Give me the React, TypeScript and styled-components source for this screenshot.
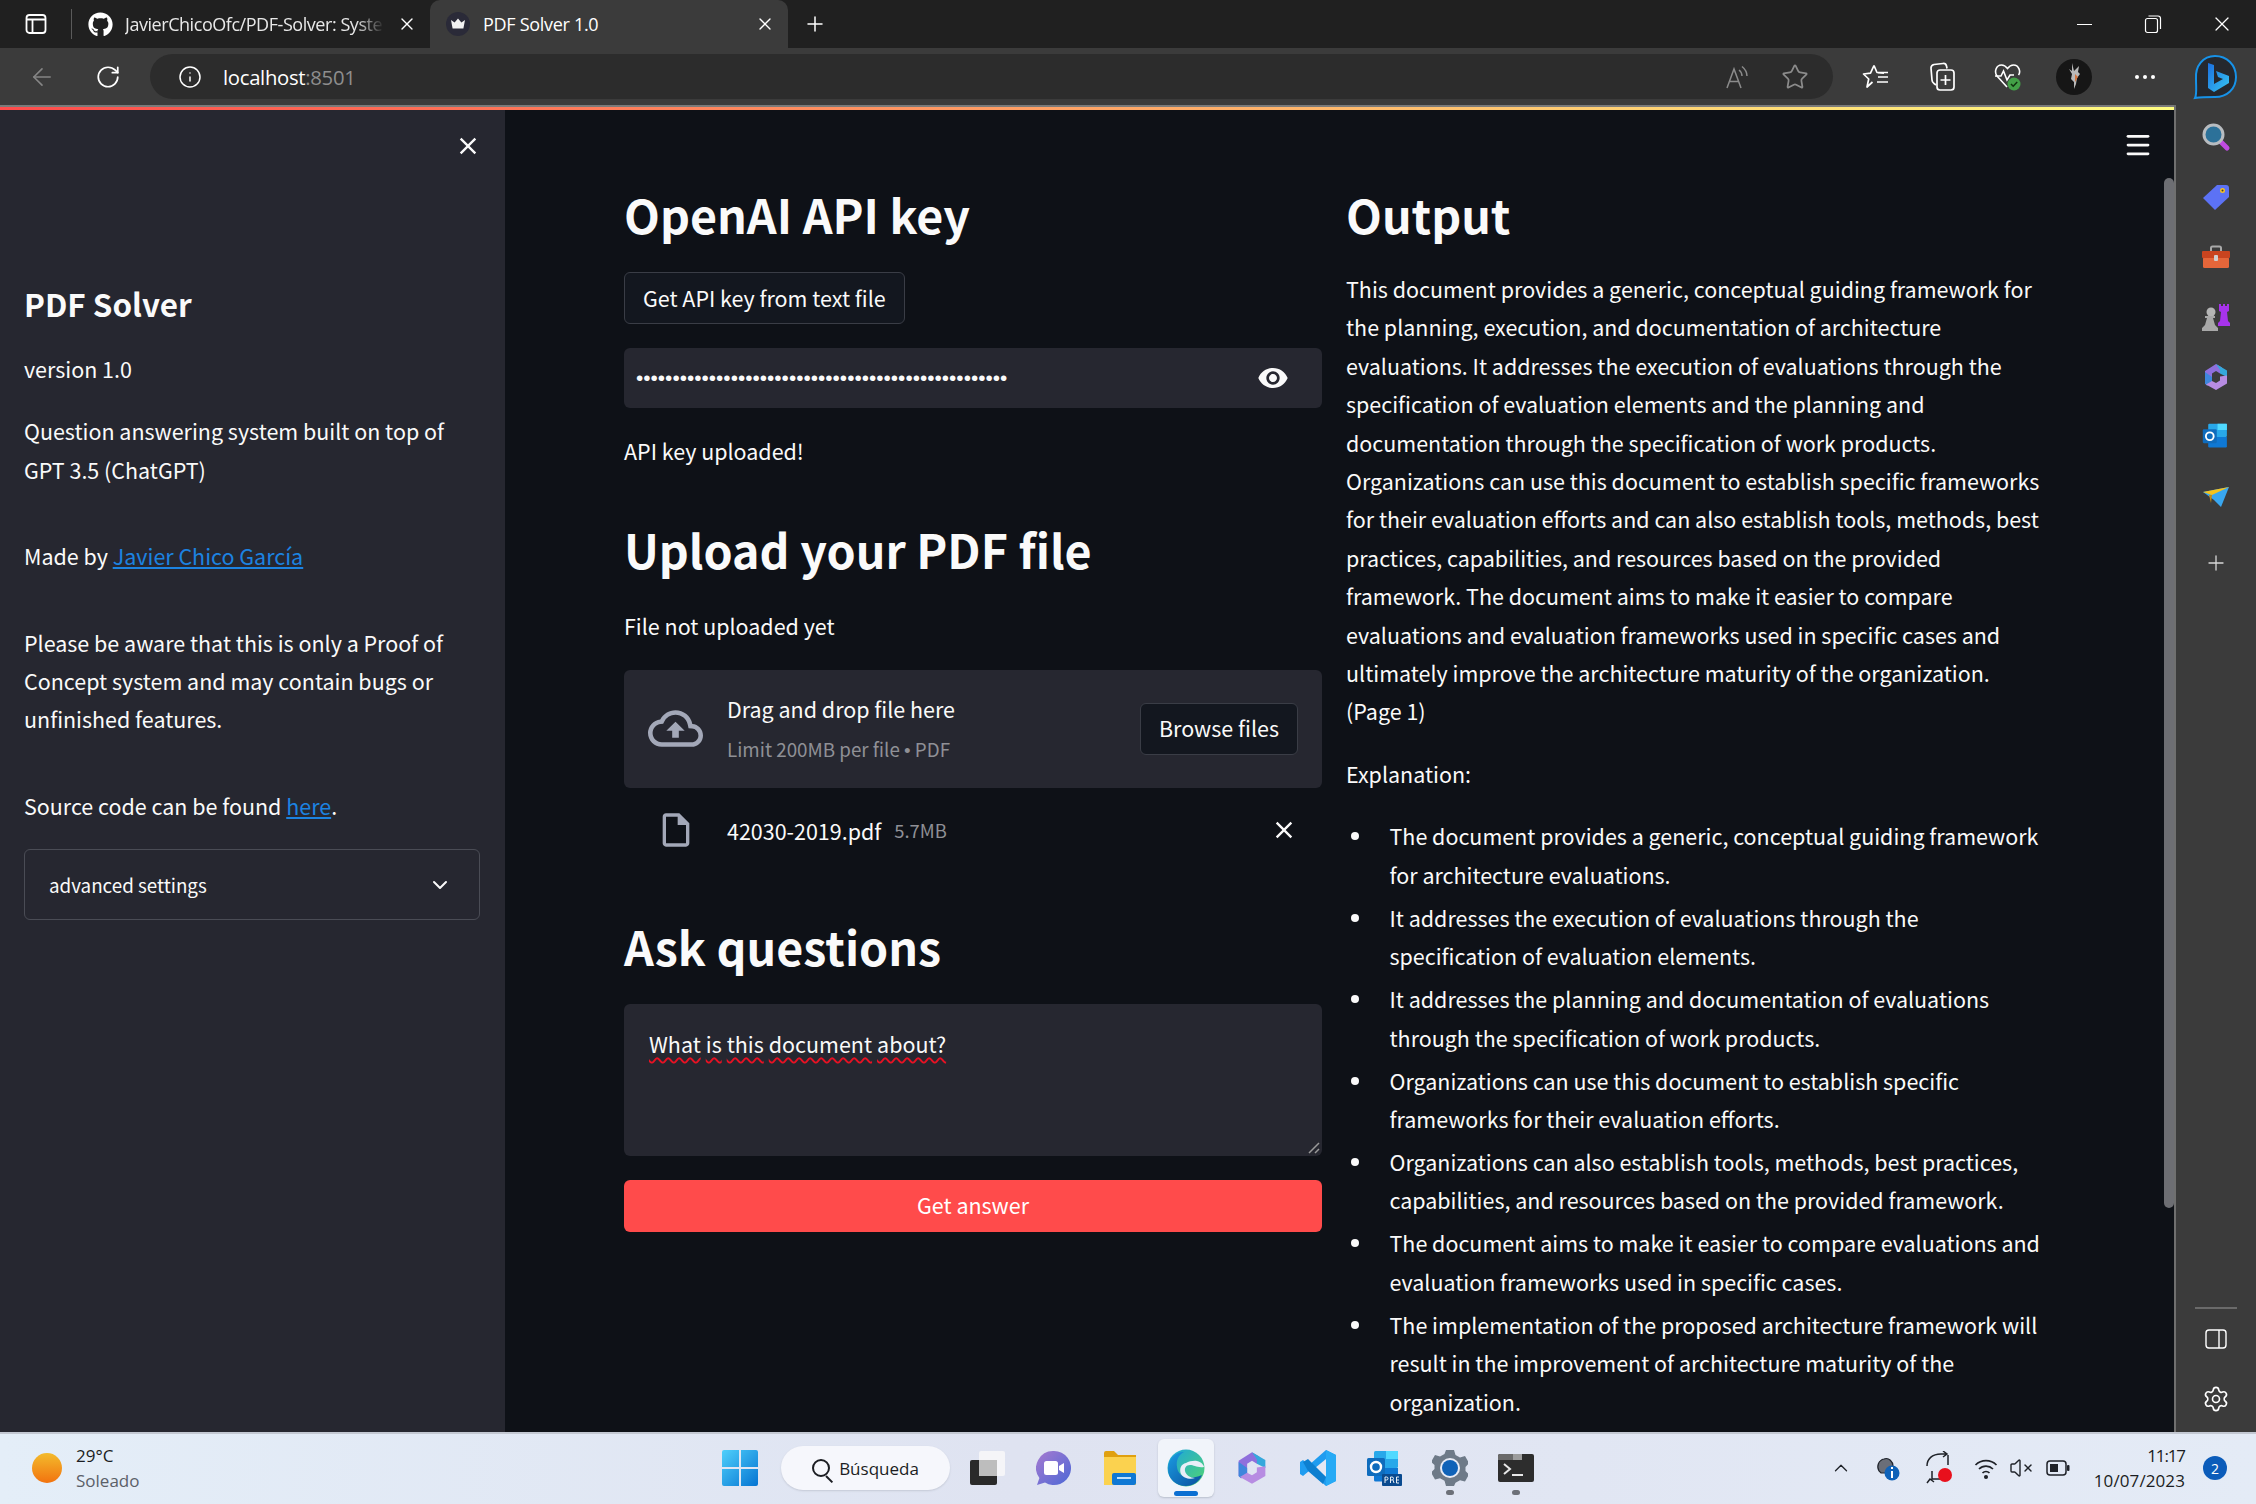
import React, { FC } from "react";
import styled, { createGlobalStyle } from "styled-components";
import { ArrowLeft, ChevronDown, ChevronUp, Info, Menu, Plus, RotateCw, Settings, Star, VolumeX, X } from "lucide-react";
import { FaGithub } from "react-icons/fa";
import { MdClose, MdOutlineCloudUpload, MdOutlineInsertDriveFile, MdVisibility } from "react-icons/md";

const summary =
	"This document provides a generic, conceptual guiding framework for the planning, execution, and documentation of architecture evaluations. It addresses the execution of evaluations through the specification of evaluation elements and the planning and documentation through the specification of work products. Organizations can use this document to establish specific frameworks for their evaluation efforts and can also establish tools, methods, best practices, capabilities, and resources based on the provided framework. The document aims to make it easier to compare evaluations and evaluation frameworks used in specific cases and ultimately improve the architecture maturity of the organization. (Page 1)";

const explanation = [
	"The document provides a generic, conceptual guiding framework for architecture evaluations.",
	"It addresses the execution of evaluations through the specification of evaluation elements.",
	"It addresses the planning and documentation of evaluations through the specification of work products.",
	"Organizations can use this document to establish specific frameworks for their evaluation efforts.",
	"Organizations can also establish tools, methods, best practices, capabilities, and resources based on the provided framework.",
	"The document aims to make it easier to compare evaluations and evaluation frameworks used in specific cases.",
	"The implementation of the proposed architecture framework will result in the improvement of architecture maturity of the organization.",
];

const question = ["What", "is", "this", "document", "about?"];

const VerticalTabsIcon = () => (
	<svg width="24" height="24" viewBox="0 0 24 24" fill="none" stroke="#fff" strokeWidth="1.8">
		<rect x="2.5" y="3" width="19" height="18" rx="3" />
		<path d="M3 7.5h18M8.5 7.5V21" />
	</svg>
);

const CrownIcon = () => (
	<svg width="24" height="24" viewBox="0 0 24 24">
		<circle cx="12" cy="12" r="12" fill="#2a2a38" />
		<path d="M5 8l3.6 2.6L12 6.5l3.4 4.1L19 8l-1.6 8.5H6.6z" fill="#f2f2f2" />
	</svg>
);

const RestoreIcon = () => (
	<svg width="18" height="20" viewBox="0 0 18 20" fill="none" stroke="#fff" strokeWidth="1.2">
		<rect x="1.5" y="4.5" width="12" height="14" rx="2" />
		<path d="M4.5 2h9.5a2.5 2.5 0 0 1 2.5 2.5V15" />
	</svg>
);

const ReadAloudIcon = () => (
	<svg width="26" height="26" viewBox="0 0 26 26" fill="none" stroke="#8b8b8b" strokeWidth="1.5">
		<path d="M3 24L10 5l7 19M5.5 17.5h9" />
		<path d="M15 6c2 1.500 3 3.500 3 6M18 2.500c3 2.500 5 5.500 5 9.500" />
	</svg>
);

const FavoritesIcon = () => (
	<svg width="28" height="28" viewBox="0 0 28 28" fill="none" stroke="#fff" strokeWidth="1.7">
		<path d="M12 2.500l3 7 7 .6M10.500 19l-5.500 5 1.700-8L1.500 11l7-.8L12 2.500" strokeLinejoin="round" />
		<path d="M16 14h10M15 19h11M15 24h0M16 9.500h10" />
	</svg>
);

const CollectionsIcon = () => (
	<svg width="28" height="30" viewBox="0 0 28 30" fill="none" stroke="#fff" strokeWidth="1.7">
		<path d="M8 23l-2-1.500c-1.500-1-2-2-2-3.500L3 6c0-2 1-3 3-3.500L15 1.500c1.500-.2 3 .5 3.500 2.500l.5 2.500" />
		<rect x="9" y="8" width="17" height="20" rx="3" />
		<path d="M17.500 13v10M12.500 18h10" />
	</svg>
);

const HealthIcon = () => (
	<svg width="28" height="30" viewBox="0 0 28 30" fill="none">
		<path d="M13 25L3 14C0 10 2 3 7.500 3c3 0 4.500 1.500 6 3.500 1.500-2 3-3.500 6-3.500C25 3 27 10 24.500 13" stroke="#fff" strokeWidth="1.6" />
		<path d="M1 14h6l2.500-5 3.500 9 3-5h4" stroke="#fff" strokeWidth="1.6" />
		<circle cx="20" cy="22" r="6.500" fill="#43a047" />
		<path d="M17 22l2.200 2.200 4-4.200" stroke="#10310f" strokeWidth="1.500" />
	</svg>
);

const AvatarIcon = () => (
	<svg width="36" height="36" viewBox="0 0 36 36">
		<circle cx="18" cy="18" r="18" fill="#161616" />
		<path d="M16 4l2 8 5-5-1 6 2 2-3 4-1 6-2 5v-7l-3-3 1-5-3-5 3 2z" fill="#b9b9b9" />
		<path d="M19 15l3 3-3 5z" fill="#d2743e" />
	</svg>
);

const BingIcon = () => (
	<svg width="46" height="46" viewBox="0 0 46 46" fill="none">
		<defs>
			<linearGradient id="bingMark" x1="0" y1="0" x2="1" y2="1">
				<stop offset="0" stopColor="#1b6fe0" />
				<stop offset="1" stopColor="#37c6f2" />
			</linearGradient>
		</defs>
		<path d="M23 2c12 0 21 9 21 21 0 12-9 20-21 20-6 0-13 0-20 1 2-4 1-10 1-19C3 12 11 2 23 2z" stroke="#1792e8" strokeWidth="2" fill="#25282e" />
		<path d="M16 9l6 2v19l9-5-5-2-2-6 13 5v7l-15 9-6-4z" fill="url(#bingMark)" />
	</svg>
);

const SearchGlassIcon = () => (
	<svg width="30" height="30" viewBox="0 0 30 30">
		<path d="M18 18l8 8" stroke="#c04be0" strokeWidth="5" strokeLinecap="round" />
		<circle cx="12.500" cy="12.500" r="9.500" fill="#2c7199" stroke="#b8bcc0" strokeWidth="3" />
	</svg>
);

const TagIcon = () => (
	<svg width="28" height="28" viewBox="0 0 28 28">
		<path d="M15 2h9a3 3 0 0 1 3 3v9L13 27 1 15z" fill="#5c72f5" />
		<circle cx="20.500" cy="7.500" r="2.500" fill="#f7c325" />
		<circle cx="20.500" cy="7.500" r="1" fill="#3a3a3a" />
	</svg>
);

const ToolboxIcon = () => (
	<svg width="30" height="24" viewBox="0 0 30 24">
		<path d="M10 6V3a1.500 1.500 0 0 1 1.500-1.500h7A1.500 1.500 0 0 1 20 3v3" fill="none" stroke="#a9a9a9" strokeWidth="2" />
		<rect x="2" y="12" width="26" height="11" rx="1.500" fill="#e5663a" />
		<rect x="1" y="6" width="28" height="7" rx="1" fill="#c9441f" />
		<rect x="13" y="10" width="4" height="6" rx="1" fill="#cfcfcf" />
	</svg>
);

const ChessIcon = () => (
	<svg width="30" height="30" viewBox="0 0 30 30">
		<path d="M18 2h2v2h2V2h2v2h2V2h2v7l-2 1 1 9 2 2v3H17v-3l2-2 1-9-2-1z" fill="#a733ec" />
		<circle cx="10" cy="10" r="4.500" fill="#b5b5b5" />
		<path d="M6 14h8v2h-2l2 7 3 3v3H1v-3l3-3 2-7H4v-2z" fill="#a8a8a8" />
	</svg>
);

const CopilotIcon = ({ size }: { size: number }) => (
	<svg width={size} height={size} viewBox="0 0 28 28">
		<path d="M14 1l6 3.500-2 6-4-2.500-4 2.500V20l-5 2.500-2-2V8z" fill="#8f6fdc" />
		<path d="M3 20.500V9l7 5v6l-5 2.500z" fill="#3f86dc" />
		<path d="M14 1l11 6.500V14l-7-3.500V7z" fill="#35a8dc" />
		<path d="M25 12.500v8L14 27 4 21.500 10 18l4 2 4-2.500v-4z" fill="#b78ce2" />
	</svg>
);

const OutlookIcon = ({ size, pre }: { size: number; pre?: boolean }) => (
	<svg width={size} height={size} viewBox="0 0 36 36">
		<rect x="8" y="1" width="24" height="17" rx="1.500" fill="#28a8ea" />
		<rect x="20" y="1" width="12" height="8" fill="#50d9ff" />
		<path d="M8 18h24v12a1.500 1.500 0 0 1-1.500 1.500h-21A1.500 1.500 0 0 1 8 30z" fill="#0f78d4" />
		<rect x="1" y="8" width="18" height="18" rx="1.500" fill="#0f6cbd" />
		<circle cx="10" cy="17" r="5" fill="none" stroke="#fff" strokeWidth="2.400" />
		{pre && <rect x="16" y="24" width="20" height="12" rx="1" fill="#0a4a8f" />}
		{pre && <path d="M19 33v-6h1.500a1.500 1.500 0 0 1 0 3H19M24.500 33v-6H26a1.500 1.500 0 0 1 0 3h-1.500M27 30l1 3M33 27h-2.500v6H33M30.500 30H33" fill="none" stroke="#fff" strokeWidth=".9" />}
	</svg>
);

const PaperPlaneIcon = () => (
	<svg width="28" height="22" viewBox="0 0 28 22">
		<path d="M1 6l26-5-8 20-7-7z" fill="#39a7f0" />
		<path d="M1 6l26-5-17 8z" fill="#f6c31c" />
		<path d="M7 9l3 0-1 8z" fill="#c58a12" />
	</svg>
);

const DockIcon = () => (
	<svg width="22" height="20" viewBox="0 0 22 20" fill="none" stroke="#fff" strokeWidth="1.400">
		<rect x="1" y="1" width="20" height="18" rx="3" />
		<path d="M14 1v18" />
	</svg>
);

const WindowsIcon = () => (
	<svg width="36" height="36" viewBox="0 0 36 36">
		<defs>
			<linearGradient id="winBlue" x1="0" y1="0" x2="1" y2="1">
				<stop offset="0" stopColor="#4fd0fb" />
				<stop offset="1" stopColor="#0574d2" />
			</linearGradient>
		</defs>
		<path d="M2 0h15v17H0V2a2 2 0 0 1 2-2zM19 0h15a2 2 0 0 1 2 2v15H19zM0 19h17v17H2a2 2 0 0 1-2-2zM19 19h17v15a2 2 0 0 1-2 2H19z" fill="url(#winBlue)" />
	</svg>
);

const TaskViewIcon = () => (
	<svg width="36" height="36" viewBox="0 0 36 36">
		<rect x="0" y="10" width="27" height="25" rx="2" fill="#2a2a2a" />
		<rect x="9" y="1" width="26" height="25" rx="2" fill="#f6f6f8" fillOpacity=".92" />
		<rect x="9" y="10" width="18" height="16" fill="#bdbdbd" />
	</svg>
);

const TeamsIcon = () => (
	<svg width="36" height="36" viewBox="0 0 36 36">
		<defs>
			<linearGradient id="chatFill" x1="0" y1="0" x2="1" y2="1">
				<stop offset="0" stopColor="#a77ad0" />
				<stop offset="1" stopColor="#4c68d6" />
			</linearGradient>
		</defs>
		<path d="M18 1a17 17 0 1 1-9 31.400L1 35l2.400-7A17 17 0 0 1 18 1z" fill="url(#chatFill)" />
		<rect x="8" y="11" width="14" height="14" rx="2.500" fill="#fff" />
		<path d="M23 16l5-3v10l-5-3z" fill="#fff" />
	</svg>
);

const FolderIcon = () => (
	<svg width="32" height="34" viewBox="0 0 32 34">
		<path d="M0 2a2 2 0 0 1 2-2h8l4 4h18v8H0z" fill="#e0a010" />
		<path d="M0 6h32v28H0z" fill="#fbd24f" />
		<rect x="8" y="22" width="24" height="12" rx="2" fill="#0f78d4" />
		<rect x="13" y="26" width="14" height="2" fill="#bfe0fb" />
	</svg>
);

const EdgeIcon = () => (
	<svg width="38" height="38" viewBox="0 0 38 38">
		<defs>
			<linearGradient id="edgeTop" x1="0" y1="0" x2="1" y2="1">
				<stop offset="0" stopColor="#1ba5e0" />
				<stop offset="1" stopColor="#52d56f" />
			</linearGradient>
			<linearGradient id="edgeLow" x1="0" y1="0" x2="1" y2="1">
				<stop offset="0" stopColor="#1b9de2" />
				<stop offset="1" stopColor="#0a4f9e" />
			</linearGradient>
		</defs>
		<circle cx="19" cy="19" r="18.500" fill="url(#edgeTop)" />
		<path d="M1 20C1 9 9 3 17 3c-6 3-8 9-7 15 1 9 10 14 25 8-3 7-9 11-16 11C9 37 1 30 1 20z" fill="url(#edgeLow)" />
		<path d="M19 14c-5 1-7 6-5 11 2 4 9 6 14 4-5 0-9-3-10-7-.5-3 1-6 5-6 4 0 7 3 14 2 0-1-2-5-7-6-4-.5-8 .5-11 2z" fill="#e9eef8" />
	</svg>
);

const VsCodeIcon = () => (
	<svg width="36" height="36" viewBox="0 0 36 36">
		<path d="M26 0l10 5v26l-10 5-17-15-6 5-3-2v-12l3-2 6 5z" fill="#1f9cf0" />
		<path d="M26 9L15 18l11 9z" fill="#e3e7f3" />
		<path d="M3 12l5-3 18 18-3 7-15-13z" fill="#0d7fd0" />
		<path d="M26 0l10 5v26l-10 5z" fill="#27aaf5" />
	</svg>
);

const GearTaskIcon = () => (
	<svg width="36" height="36" viewBox="0 0 36 36">
		<path d="M14 0h8l1.500 5 4.500 2.500 5-1.500 4 7-3.500 4v4l3.500 3.500-4 7-5-1.300-4.500 2.500L22 36h-8l-1.500-5.300L8 28.200l-5 1.300-4-7L2.500 19v-4L-1 12l4-7 5 1.500 4.500-2.500z" fill="#6e7a88" />
		<circle cx="18" cy="18" r="10" fill="#e8ecf6" />
		<circle cx="18" cy="18" r="8" fill="#0f62b8" />
	</svg>
);

const TerminalIcon = () => (
	<svg width="36" height="28" viewBox="0 0 36 28">
		<rect width="36" height="28" rx="2" fill="#2d2d2d" />
		<path d="M2 0h13v6H0V2a2 2 0 0 1 2-2z" fill="#6a6a6a" />
		<rect x="15" width="9" height="6" fill="#9c9c9c" />
		<path d="M6 10l6 5-6 5" fill="none" stroke="#e8e8e8" strokeWidth="2" />
		<path d="M14 21h11" stroke="#e8e8e8" strokeWidth="2" />
	</svg>
);

const TrayCloudIcon = () => (
	<svg width="26" height="28" viewBox="0 0 26 28">
		<path d="M3 17c-3-5 0-11 5-12 5-2 9 3 9 7v7H5z" fill="#6a6e78" stroke="#20242c" strokeWidth="1.200" />
		<circle cx="16" cy="19" r="7.500" fill="#0f62b8" />
		<path d="M16 13v2M16 17v7" stroke="#fff" strokeWidth="2" />
	</svg>
);

const TraySyncIcon = () => (
	<svg width="30" height="34" viewBox="0 0 30 34" fill="none" stroke="#1f2228" strokeWidth="1.500">
		<path d="M3 15C3 8 8 3 17 3h6M19 0l4 3-4 3M24 4v10M8 20v8h8M3 32l3-4 4 3" />
		<circle cx="21" cy="24" r="7" fill="#e8101c" stroke="none" />
	</svg>
);

const WifiIcon = () => (
	<svg width="24" height="24" viewBox="0 0 24 24" fill="none" stroke="#1f2228" strokeWidth="1.700">
		<path d="M1.500 9a15 15 0 0 1 21 0M5 13a10 10 0 0 1 14 0M8.500 17a5 5 0 0 1 7 0" />
		<circle cx="12" cy="21" r="1.200" fill="#1f2228" />
	</svg>
);

const BatteryIcon = () => (
	<svg width="24" height="16" viewBox="0 0 24 16">
		<rect x="1" y="1" width="19" height="14" rx="3" fill="none" stroke="#1f2228" strokeWidth="1.500" />
		<rect x="4" y="4" width="8" height="8" fill="#1f2228" />
		<rect x="21" y="5" width="2.500" height="6" rx="1" fill="#1f2228" />
	</svg>
);

const ResizeGrip = () => (
	<svg width="12" height="12" viewBox="0 0 12 12" stroke="#9a9a9a" strokeWidth="1.500">
		<path d="M1 11L11 1M7 11l4-4" />
	</svg>
);

const App: FC = () => {
	return (
		<Window>
			<GlobalStyle />
			<TabStrip>
				<StripButton $width={72}>
					<VerticalTabsIcon />
				</StripButton>
				<StripDivider />
				<Tab>
					<FaviconSlot>
						<FaGithub size={25} color="#fff" />
					</FaviconSlot>
					<FadingTitle>JavierChicoOfc/PDF-Solver: Syste</FadingTitle>
					<X size={20} color="#fff" strokeWidth={1.6} />
				</Tab>
				<ActiveTab>
					<FaviconSlot>
						<CrownIcon />
					</FaviconSlot>
					<TabTitle>PDF Solver 1.0</TabTitle>
					<X size={20} color="#fff" strokeWidth={1.6} />
				</ActiveTab>
				<StripButton $width={54}>
					<Plus size={24} color="#fff" strokeWidth={1.5} />
				</StripButton>
				<WindowControls>
					<WindowButton>
						<Minimize />
					</WindowButton>
					<WindowButton>
						<RestoreIcon />
					</WindowButton>
					<WindowButton>
						<X size={24} color="#fff" strokeWidth={1.2} />
					</WindowButton>
				</WindowControls>
			</TabStrip>
			<Toolbar>
				<ToolButton $width={66}>
					<ArrowLeft size={28} color="#858585" strokeWidth={1.4} />
				</ToolButton>
				<ToolButton $width={66}>
					<RotateCw size={26} color="#fff" strokeWidth={1.6} />
				</ToolButton>
				<AddressBar>
					<Info size={24} color="#fff" strokeWidth={1.5} />
					<Url>
						localhost<UrlPort>:8501</UrlPort>
					</Url>
					<AddressActions>
						<ReadAloudIcon />
						<Star size={28} color="#8b8b8b" strokeWidth={1.5} />
					</AddressActions>
				</AddressBar>
				<ToolIcons>
					<ToolButton $width={66}>
						<FavoritesIcon />
					</ToolButton>
					<ToolButton $width={66}>
						<CollectionsIcon />
					</ToolButton>
					<ToolButton $width={66}>
						<HealthIcon />
					</ToolButton>
					<ToolButton $width={66}>
						<AvatarIcon />
					</ToolButton>
					<ToolButton $width={76}>
						<MoreDots>
							<i />
							<i />
							<i />
						</MoreDots>
					</ToolButton>
					<ToolButton $width={64}>
						<BingIcon />
					</ToolButton>
				</ToolIcons>
			</Toolbar>
			<Body>
				<AppArea>
					<Decoration />
					<AppRow>
						<Sidebar>
							<SidebarClose>
								<MdClose size={28} color="#fafafa" />
							</SidebarClose>
							<SidebarTitle>PDF Solver</SidebarTitle>
							<Text>version 1.0</Text>
							<Text>Question answering system built on top of GPT 3.5 (ChatGPT)</Text>
							<LooseText>
								Made by <Link>Javier Chico García</Link>
							</LooseText>
							<LooseText>
								Please be aware that this is only a Proof of Concept system and may contain bugs or unfinished features.
							</LooseText>
							<LooseText>
								Source code can be found <Link>here</Link>.
							</LooseText>
							<Expander>
								<span>advanced settings</span>
								<ChevronDown size={24} color="#fafafa" strokeWidth={2} />
							</Expander>
						</Sidebar>
						<Main>
							<MainMenu>
								<Menu size={30} color="#fafafa" strokeWidth={2.2} />
							</MainMenu>
							<ScrollThumb />
							<Column>
								<Heading>OpenAI API key</Heading>
								<GhostButton>Get API key from text file</GhostButton>
								<PasswordField>
									<PasswordInput type="password" readOnly value={"x".repeat(51)} />
									<MdVisibility size={32} color="#fafafa" />
								</PasswordField>
								<Text>API key uploaded!</Text>
								<SpacedHeading>Upload your PDF file</SpacedHeading>
								<Text>File not uploaded yet</Text>
								<Uploader>
									<Dropzone>
										<IconSlot>
											<MdOutlineCloudUpload size={55} color="#a3a8b8" />
										</IconSlot>
										<DropText>
											<DropTitle>Drag and drop file here</DropTitle>
											<DropHint>
												Limit 200MB per file <HintBullet>•</HintBullet> PDF
											</DropHint>
										</DropText>
										<GhostButton>Browse files</GhostButton>
									</Dropzone>
									<FileRow>
										<IconSlot>
											<MdOutlineInsertDriveFile size={40} color="#a3a8b8" />
										</IconSlot>
										<FileName>42030-2019.pdf</FileName>
										<FileSize>5.7MB</FileSize>
										<FileRemove>
											<MdClose size={28} color="#fafafa" />
										</FileRemove>
									</FileRow>
								</Uploader>
								<SpacedHeading>Ask questions</SpacedHeading>
								<QuestionBox>
									{question.map((word) => {
										return <SpellingError key={word}>{word}</SpellingError>;
									})}
									<GripCorner>
										<ResizeGrip />
									</GripCorner>
								</QuestionBox>
								<PrimaryButton>Get answer</PrimaryButton>
							</Column>
							<OutputColumn>
								<OutputHeading>Output</OutputHeading>
								<Text>{summary}</Text>
								<Text>Explanation:</Text>
								<BulletList>
									{explanation.map((item) => {
										return <li key={item}>{item}</li>;
									})}
								</BulletList>
							</OutputColumn>
						</Main>
					</AppRow>
				</AppArea>
				<EdgePanel>
					<PanelSlot>
						<SearchGlassIcon />
					</PanelSlot>
					<PanelSlot>
						<TagIcon />
					</PanelSlot>
					<PanelSlot>
						<ToolboxIcon />
					</PanelSlot>
					<PanelSlot>
						<ChessIcon />
					</PanelSlot>
					<PanelSlot>
						<CopilotIcon size={28} />
					</PanelSlot>
					<PanelSlot>
						<OutlookIcon size={28} />
					</PanelSlot>
					<PanelSlot>
						<PaperPlaneIcon />
					</PanelSlot>
					<AddSlot>
						<Plus size={24} color="#d8d8d8" strokeWidth={1.3} />
					</AddSlot>
					<PanelBottom>
						<PanelDivider />
						<PanelSlot>
							<DockIcon />
						</PanelSlot>
						<PanelSlot>
							<Settings size={28} color="#fff" strokeWidth={1.4} />
						</PanelSlot>
					</PanelBottom>
				</EdgePanel>
			</Body>
			<Taskbar>
				<Weather>
					<Sun />
					<WeatherText>
						<span>29°C</span>
						<WeatherHint>Soleado</WeatherHint>
					</WeatherText>
				</Weather>
				<TaskIcons>
					<TaskSlot>
						<WindowsIcon />
					</TaskSlot>
					<SearchPill>
						<SearchGlyph />
						Búsqueda
					</SearchPill>
					<TaskSlot>
						<TaskViewIcon />
					</TaskSlot>
					<TaskSlot>
						<TeamsIcon />
					</TaskSlot>
					<TaskSlot>
						<FolderIcon />
					</TaskSlot>
					<TaskSlot $active>
						<EdgeIcon />
					</TaskSlot>
					<TaskSlot>
						<CopilotIcon size={34} />
					</TaskSlot>
					<TaskSlot>
						<VsCodeIcon />
					</TaskSlot>
					<TaskSlot>
						<OutlookIcon size={36} pre />
					</TaskSlot>
					<TaskSlot $running>
						<GearTaskIcon />
					</TaskSlot>
					<TaskSlot $running>
						<TerminalIcon />
					</TaskSlot>
				</TaskIcons>
				<Tray>
					<TraySlot $width={48}>
						<ChevronUp size={22} color="#1f2228" strokeWidth={1.4} />
					</TraySlot>
					<TraySlot $width={48}>
						<TrayCloudIcon />
					</TraySlot>
					<TraySlot $width={52}>
						<TraySyncIcon />
					</TraySlot>
					<TraySlot $width={42}>
						<WifiIcon />
					</TraySlot>
					<TraySlot $width={28}>
						<VolumeX size={24} color="#1f2228" strokeWidth={1.4} />
					</TraySlot>
					<TraySlot $width={46}>
						<BatteryIcon />
					</TraySlot>
					<Clock>
						<ClockTime>11:17</ClockTime>
						<ClockDate>10/07/2023</ClockDate>
					</Clock>
					<Badge>2</Badge>
				</Tray>
			</Taskbar>
		</Window>
	);
};

export default App;

// Noto Sans CJK carries Source Sans latin glyphs, drawn about 11% larger
const appFont = `"Noto Sans CJK SC", "Noto Sans", sans-serif`;
const systemFont = `"Open Sans", "Noto Sans", sans-serif`;

const GlobalStyle = createGlobalStyle`
	html, body {
		margin: 0;
		padding: 0;
		background: #0e1117;
	}
	* {
		box-sizing: border-box;
	}
`;

const Window = styled.div`
	width: 2256px;
	height: 1504px;
	display: flex;
	flex-direction: column;
	overflow: hidden;
	font-family: ${appFont};
	color: #fafafa;
`;

const TabStrip = styled.div`
	height: 48px;
	flex: none;
	display: flex;
	align-items: stretch;
	background: #202020;
	font-family: ${systemFont};
`;

const StripButton = styled.div<{ $width: number }>`
	width: ${(p) => p.$width}px;
	display: flex;
	align-items: center;
	justify-content: center;
`;

const StripDivider = styled.div`
	width: 1px;
	height: 30px;
	margin: 9px 0 0 -1px;
	background: #5a5a5a;
`;

const Tab = styled.div`
	width: 358px;
	padding: 0 13px 0 13px;
	display: flex;
	align-items: center;
	gap: 10px;
	font-size: 18px;
	color: #e8e8e8;
`;

const ActiveTab = styled(Tab)`
	background: #3b3b3b;
	border-radius: 10px 10px 0 0;
	color: #fff;
`;

const FaviconSlot = styled.div`
	width: 30px;
	flex: none;
	display: flex;
	justify-content: center;
`;

const TabTitle = styled.span`
	flex: 1;
	overflow: hidden;
	white-space: nowrap;
	letter-spacing: -0.3px;
`;

const FadingTitle = styled(TabTitle)`
	letter-spacing: -0.45px;
	mask-image: linear-gradient(90deg, #000 88%, transparent 99%);
`;

const WindowControls = styled.div`
	margin-left: auto;
	display: flex;
`;

const WindowButton = styled.div`
	width: 68.5px;
	display: flex;
	align-items: center;
	justify-content: center;
`;

const Minimize = styled.div`
	width: 15px;
	height: 1px;
	background: #fff;
`;

const Toolbar = styled.div`
	height: 57px;
	flex: none;
	display: flex;
	align-items: center;
	padding-left: 9px;
	background: #3b3b3b;
	font-family: ${systemFont};
`;

const ToolButton = styled.div<{ $width: number }>`
	width: ${(p) => p.$width}px;
	flex: none;
	display: flex;
	align-items: center;
	justify-content: center;
`;

const AddressBar = styled.div`
	width: 1683px;
	height: 45px;
	margin: 0 0 0 9px;
	padding: 0 24px 0 28px;
	display: flex;
	align-items: center;
	flex: none;
	border-radius: 23px;
	background: #2c2c2c;
`;

const Url = styled.span`
	margin-left: 21px;
	font-size: 20.3px;
	letter-spacing: -0.3px;
	color: #fff;
`;

const UrlPort = styled.span`
	color: #8e8e8e;
`;

const AddressActions = styled.div`
	margin-left: auto;
	display: flex;
	align-items: center;
	gap: 31px;
`;

const ToolIcons = styled.div`
	display: flex;
	align-items: center;
	margin-left: 10px;
`;

const MoreDots = styled.div`
	display: flex;
	gap: 4px;

	i {
		width: 4px;
		height: 4px;
		border-radius: 50%;
		background: #fff;
	}
`;

const Body = styled.div`
	flex: 1;
	min-height: 0;
	display: flex;
`;

const AppArea = styled.div`
	flex: 1;
	min-width: 0;
	display: flex;
	flex-direction: column;
`;

const Decoration = styled.div`
	height: 5px;
	flex: none;
	border-top: 2px solid #7a7a7a;
	background: linear-gradient(90deg, #ff4b4b, #fffd80);
`;

const AppRow = styled.div`
	flex: 1;
	min-height: 0;
	display: flex;
`;

const Sidebar = styled.aside`
	position: relative;
	width: 505px;
	flex: none;
	padding: 172px 25px 0 24px;
	display: flex;
	flex-direction: column;
	gap: 24px;
	background: #262730;
`;

const SidebarClose = styled.div`
	position: absolute;
	top: 22px;
	right: 23px;
	display: flex;
`;

const SidebarTitle = styled.h2`
	margin: 0 0 1px;
	font-size: 31.4px;
	line-height: 43px;
	font-weight: 600;
`;

const Text = styled.p`
	margin: 0;
	font-size: 21.47px;
	line-height: 38.4px;
`;

const LooseText = styled(Text)`
	margin-top: 24px;
`;

const Link = styled.a`
	color: #1c83e1;
	text-decoration: underline;
`;

const Expander = styled.div`
	height: 71px;
	padding: 0 27px 0 24px;
	display: flex;
	align-items: center;
	justify-content: space-between;
	border: 1px solid #4a4c55;
	border-radius: 6px;
	font-size: 18.8px;
`;

const Main = styled.main`
	position: relative;
	flex: 1;
	min-width: 0;
	padding: 73px 0 0 119px;
	display: grid;
	grid-template-columns: 698px 698px;
	column-gap: 24px;
	align-items: start;
	background: #0e1117;
	overflow: hidden;
`;

const MainMenu = styled.div`
	position: absolute;
	top: 20px;
	right: 21px;
	display: flex;
`;

const ScrollThumb = styled.div`
	position: absolute;
	top: 68px;
	right: 0;
	width: 10px;
	height: 1030px;
	border-radius: 5px;
	background: #6d6e73;
`;

const Column = styled.section`
	display: flex;
	flex-direction: column;
	gap: 24px;
	min-width: 0;
`;

const OutputColumn = styled(Column)`
	gap: 24px;
`;

const Heading = styled.h1`
	margin: 0;
	padding-bottom: 4px;
	font-size: 46.6px;
	line-height: 61px;
	font-weight: 600;
`;

const OutputHeading = styled(Heading)`
	margin-bottom: -2px;
`;

const SpacedHeading = styled(Heading)`
	margin-top: 24px;
`;

const GhostButton = styled.button`
	align-self: flex-start;
	flex: none;
	height: 52px;
	padding: 0 18px 2px;
	border: 1px solid #3a3d46;
	border-radius: 6px;
	background: #13171f;
	color: #fafafa;
	font-family: inherit;
	font-size: 21.47px;
`;

const PasswordField = styled.div`
	height: 60px;
	padding: 0 33px 0 12px;
	display: flex;
	align-items: center;
	border-radius: 6px;
	background: #262730;
`;

const PasswordInput = styled.input`
	flex: 1;
	border: 0;
	outline: 0;
	padding: 0;
	background: transparent;
	color: #fafafa;
	font-family: "Liberation Sans", sans-serif;
	font-size: 20.8px;
`;

const Uploader = styled.div`
	margin-bottom: 6px;
	display: flex;
	flex-direction: column;
	gap: 15px;
`;

const Dropzone = styled.div`
	height: 118px;
	padding: 0 24px 0 0;
	display: flex;
	align-items: center;
	border-radius: 6px;
	background: #262730;

	button {
		align-self: center;
	}
`;

const IconSlot = styled.div`
	width: 103px;
	flex: none;
	display: flex;
	justify-content: center;
`;

const DropText = styled.div`
	flex: 1;
	display: flex;
	flex-direction: column;
	gap: 7px;
`;

const DropTitle = styled.span`
	font-size: 21.47px;
	line-height: 36px;
`;

const DropHint = styled.span`
	font-size: 18.8px;
	line-height: 30px;
	color: #8f9096;
`;

const HintBullet = styled.span`
	font-family: "Liberation Sans", sans-serif;
`;

const FileRow = styled.div`
	height: 58px;
	padding-bottom: 3px;
	display: flex;
	align-items: center;
`;

const FileName = styled.span`
	font-size: 21.47px;
`;

const FileSize = styled.span`
	margin-left: 13px;
	font-size: 18.4px;
	color: #8f9096;
`;

const FileRemove = styled.div`
	margin-left: auto;
	margin-right: 24px;
	display: flex;
`;

const QuestionBox = styled.div`
	position: relative;
	height: 152px;
	padding: 22px 25px;
	display: flex;
	gap: 5px;
	font-size: 21.47px;
	line-height: 36px;
	border-radius: 6px;
	background: #262730;
	align-items: flex-start;
`;

const SpellingError = styled.span`
	text-decoration: underline wavy #e81123 1.5px;
	text-underline-offset: 4px;
`;

const GripCorner = styled.div`
	position: absolute;
	right: 2px;
	bottom: 2px;
	display: flex;
`;

const PrimaryButton = styled.button`
	height: 52px;
	padding: 0 0 2px;
	border: 0;
	border-radius: 6px;
	background: #ff4b4b;
	color: #fff;
	font-family: inherit;
	font-size: 21.47px;
`;

const BulletList = styled.ul`
	margin: 0;
	padding: 0 0 0 43.5px;
	list-style: none;
	font-size: 21.47px;
	line-height: 38.4px;

	li {
		position: relative;
		margin-bottom: 4.6px;
	}

	li::before {
		content: "";
		position: absolute;
		left: -39px;
		top: 15px;
		width: 8px;
		height: 8px;
		border-radius: 50%;
		background: #fafafa;
	}
`;

const EdgePanel = styled.div`
	width: 82px;
	flex: none;
	padding-top: 2px;
	display: flex;
	flex-direction: column;
	border-left: 2px solid #6f6f6f;
	background: #3b3b3b;
`;

const PanelSlot = styled.div`
	height: 60px;
	flex: none;
	display: flex;
	align-items: center;
	justify-content: center;
`;

const AddSlot = styled(PanelSlot)`
	margin-top: 6px;
`;

const PanelBottom = styled.div`
	margin-top: auto;
	padding-bottom: 3px;
	display: flex;
	flex-direction: column;
	align-items: center;
`;

const PanelDivider = styled.div`
	width: 42px;
	height: 2px;
	background: #6a6a6a;
`;

const Taskbar = styled.footer`
	height: 72px;
	flex: none;
	padding-bottom: 2px;
	display: grid;
	grid-template-columns: 1fr auto 1fr;
	align-items: center;
	border-top: 2px solid #c3c8d2;
	background: linear-gradient(90deg, #e4eef8 0%, #dfe3f1 45%, #e1e6f3 70%, #e4ebf6 100%);
	color: #1b1d22;
	font-family: ${systemFont};
`;

const Weather = styled.div`
	padding-left: 32px;
	display: flex;
	align-items: center;
	gap: 14px;
`;

const Sun = styled.div`
	width: 30px;
	height: 30px;
	border-radius: 50%;
	background: linear-gradient(180deg, #f3bb2c, #f2730f);
`;

const WeatherText = styled.div`
	display: flex;
	flex-direction: column;
	font-size: 17px;
	line-height: 25px;
`;

const WeatherHint = styled.span`
	color: #5b6068;
`;

const TaskIcons = styled.div`
	display: flex;
	align-items: center;
`;

const TaskSlot = styled.div<{ $active?: boolean; $running?: boolean }>`
	position: relative;
	width: 66px;
	height: 58px;
	display: flex;
	align-items: center;
	justify-content: center;

	${(p) =>
		p.$active &&
		`
		&::before {
			content: "";
			position: absolute;
			inset: 0 5px;
			z-index: 0;
			border-radius: 6px;
			background: #f1f4fa;
			box-shadow: 0 1px 2px #b9bfcc;
		}
		&::after {
			content: "";
			position: absolute;
			left: 21px;
			bottom: 1px;
			width: 24px;
			height: 5px;
			border-radius: 3px;
			background: #0b6fd2;
		}
		svg {
			position: relative;
		}
	`}

	${(p) =>
		p.$running &&
		`
		&::after {
			content: "";
			position: absolute;
			left: 29px;
			bottom: 2px;
			width: 8px;
			height: 5px;
			border-radius: 3px;
			background: #6c7078;
		}
	`}
`;

const SearchPill = styled.div`
	width: 169px;
	height: 44px;
	margin: 0 5px 0 8px;
	display: flex;
	align-items: center;
	justify-content: center;
	gap: 9px;
	border-radius: 22px;
	background: #f6f7fc;
	box-shadow: 0 1px 2px #c4c9d6;
	font-size: 17px;
`;

const SearchGlyph = styled.i`
	position: relative;
	width: 18px;
	height: 18px;
	border: 2px solid #1b1d22;
	border-radius: 50%;

	&::after {
		content: "";
		position: absolute;
		left: 12px;
		top: 14px;
		width: 9px;
		height: 2px;
		background: #1b1d22;
		transform: rotate(45deg);
		transform-origin: left center;
	}
`;

const Tray = styled.div`
	padding-right: 29px;
	display: flex;
	align-items: center;
	justify-content: flex-end;
`;

const TraySlot = styled.div<{ $width: number }>`
	width: ${(p) => p.$width}px;
	display: flex;
	align-items: center;
	justify-content: center;
`;

const Clock = styled.div`
	width: 104px;
	display: flex;
	flex-direction: column;
	align-items: flex-end;
	font-size: 17px;
	line-height: 25px;
`;

const ClockTime = styled.span`
	letter-spacing: -1.1px;
`;

const ClockDate = styled.span`
	letter-spacing: 0.1px;
`;

const Badge = styled.div`
	width: 24px;
	height: 24px;
	margin-left: 18px;
	display: flex;
	align-items: center;
	justify-content: center;
	border-radius: 50%;
	background: #0b5cba;
	color: #fff;
	font-size: 14px;
`;
